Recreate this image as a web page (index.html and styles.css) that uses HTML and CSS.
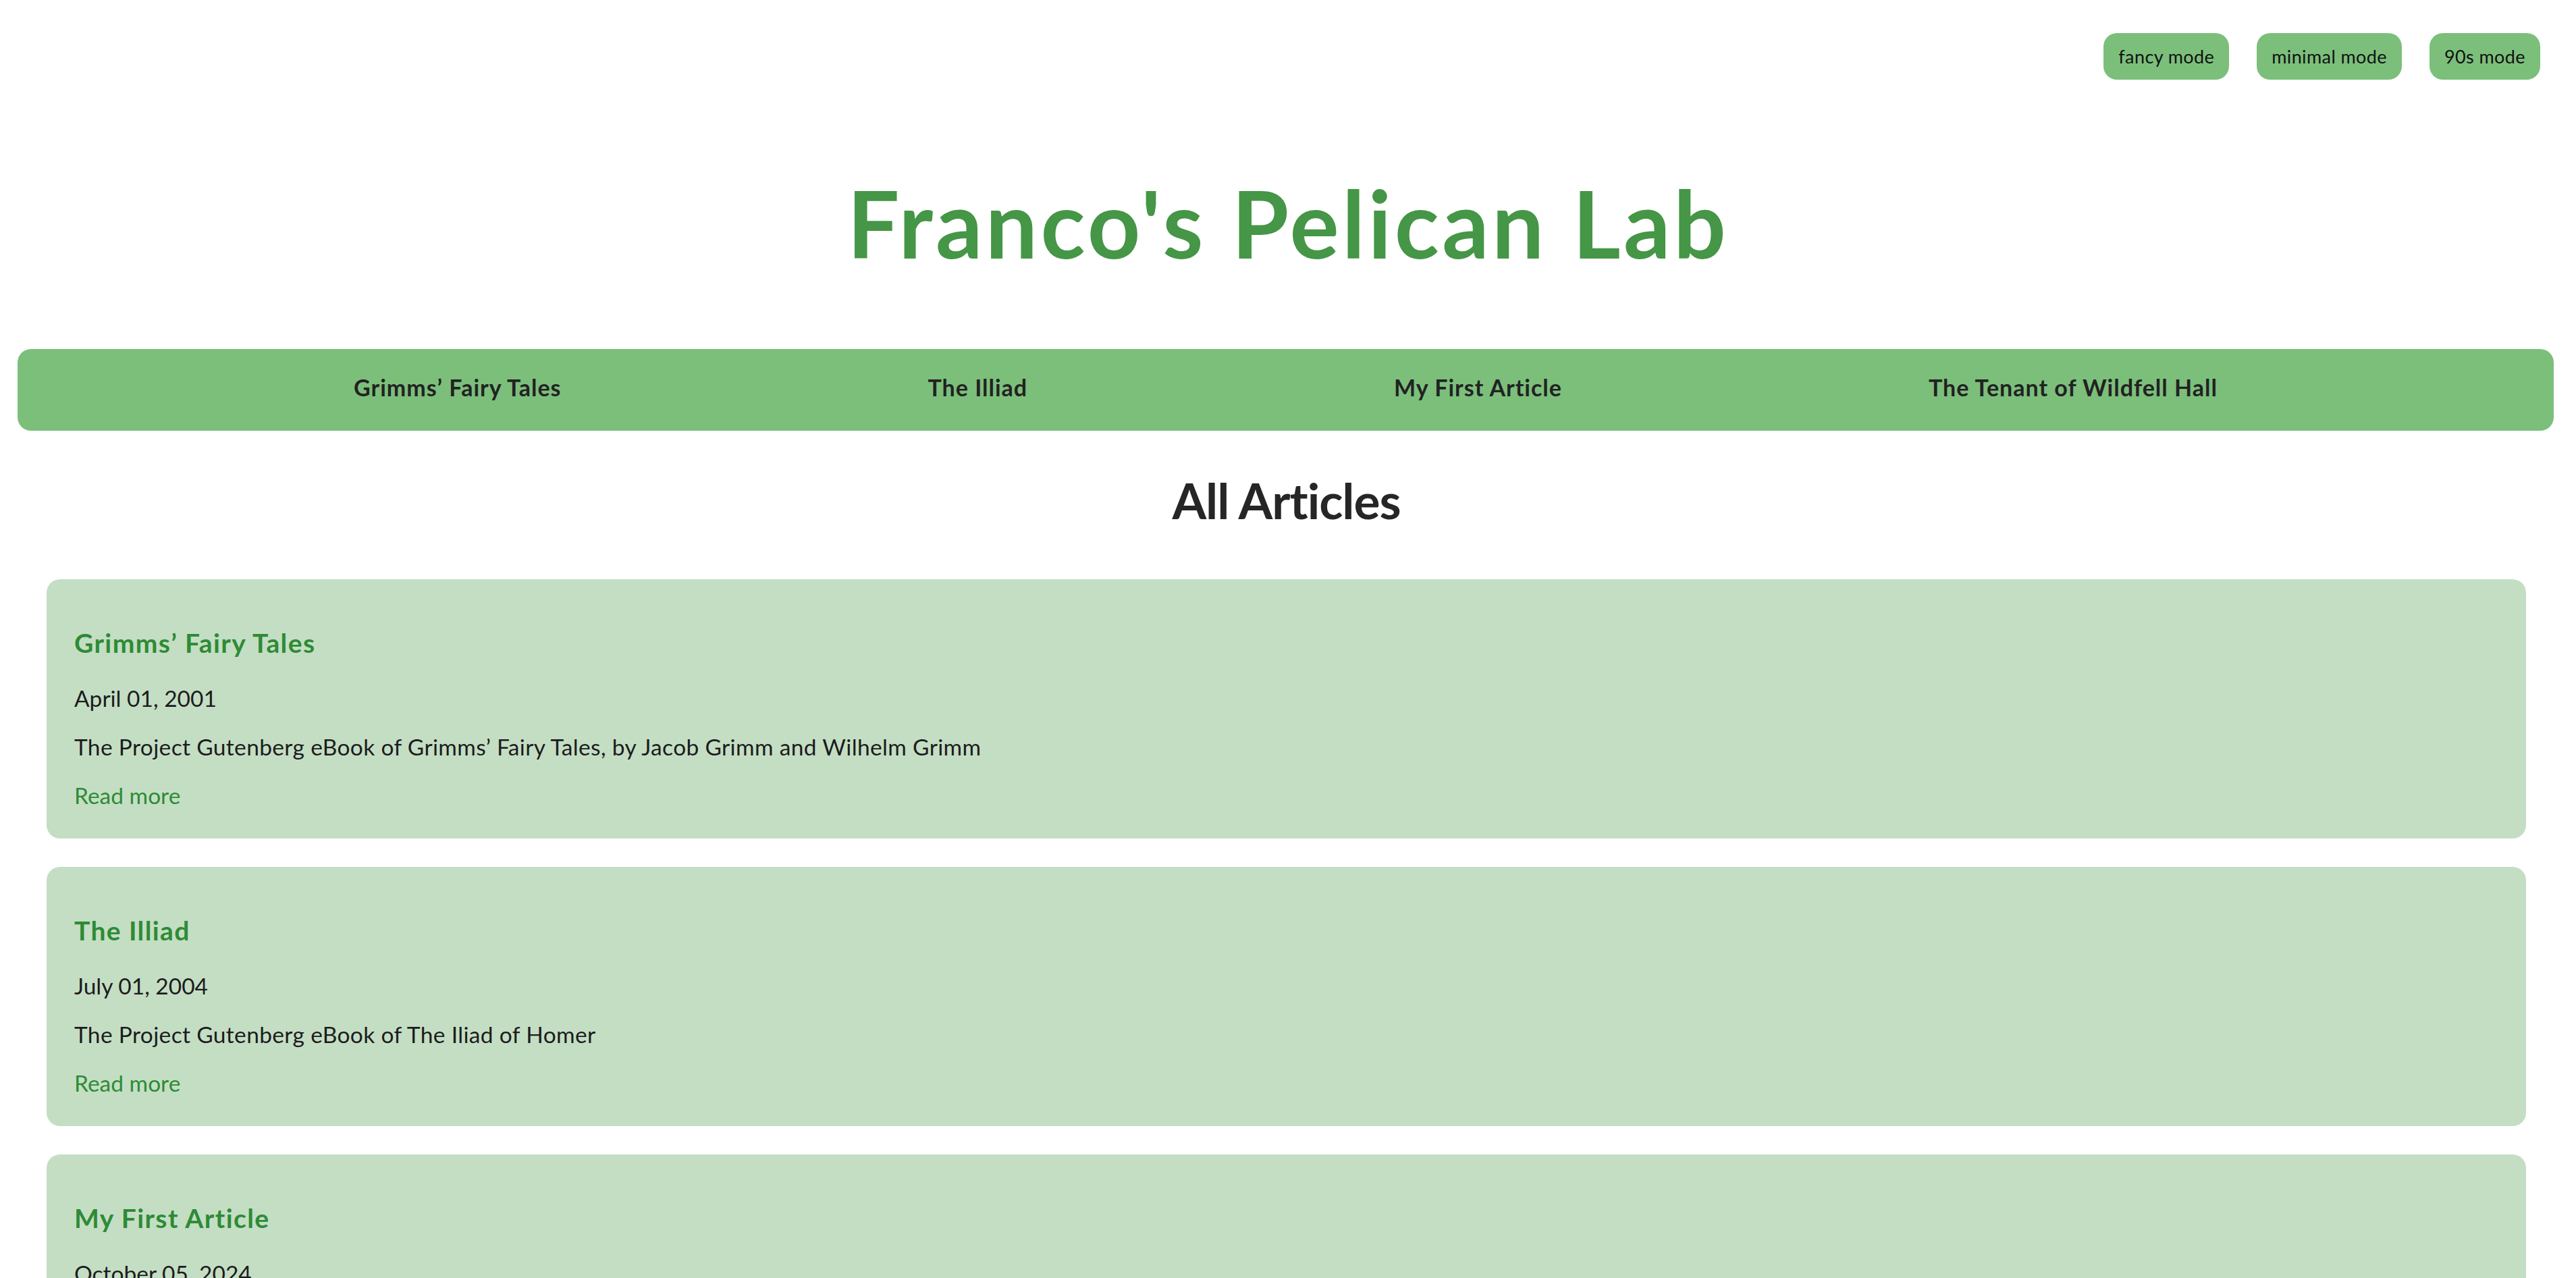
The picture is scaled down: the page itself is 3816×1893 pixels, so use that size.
FILE: index.html
```html
<!DOCTYPE html>
<html lang="en">
<head>
<meta charset="utf-8">
<title>Franco's Pelican Lab</title>
<link rel="stylesheet" href="styles.css">
</head>
<body>
<header class="site-header">
  <div class="modes">
    <button class="mode-btn">fancy mode</button>
    <button class="mode-btn">minimal mode</button>
    <button class="mode-btn">90s mode</button>
  </div>
  <h1 class="site-title">Franco's Pelican Lab</h1>
  <nav class="main-nav">
    <a href="#">Grimms’ Fairy Tales</a>
    <a href="#">The Illiad</a>
    <a href="#">My First Article</a>
    <a href="#">The Tenant of Wildfell Hall</a>
  </nav>
</header>
<main class="content">
  <h2 class="page-title">All Articles</h2>
  <div class="articles">
    <article class="card">
      <h3 class="card-title">Grimms’ Fairy Tales</h3>
      <p class="card-date">April 01, 2001</p>
      <p class="card-desc">The Project Gutenberg eBook of Grimms’ Fairy Tales, by Jacob Grimm and Wilhelm Grimm</p>
      <a class="read-more" href="#">Read more</a>
    </article>
    <article class="card">
      <h3 class="card-title">The Illiad</h3>
      <p class="card-date">July 01, 2004</p>
      <p class="card-desc">The Project Gutenberg eBook of The Iliad of Homer</p>
      <a class="read-more" href="#">Read more</a>
    </article>
    <article class="card">
      <h3 class="card-title">My First Article</h3>
      <p class="card-date">October 05, 2024</p>
      <p class="card-desc">This is my first article on the blog.</p>
      <a class="read-more" href="#">Read more</a>
    </article>
    <article class="card">
      <h3 class="card-title">The Tenant of Wildfell Hall</h3>
      <p class="card-date">June 01, 1997</p>
      <p class="card-desc">The Project Gutenberg eBook of The Tenant of Wildfell Hall, by Anne Brontë</p>
      <a class="read-more" href="#">Read more</a>
    </article>
  </div>
</main>
</body>
</html>
```

FILE: styles.css
```css
html, body {
  margin: 0;
  padding: 0;
  background: #ffffff;
}

body {
  font-family: "Lato", "Noto Sans", sans-serif;
  color: #222222;
}

.site-header {
  display: flex;
  flex-direction: column;
}

.modes {
  display: flex;
  justify-content: flex-end;
  gap: 41px;
  padding: 49px 53px 0 0;
}

.mode-btn {
  font-family: "Lato", "Noto Sans", sans-serif;
  font-size: 27px;
  letter-spacing: 0.4px;
  color: #111111;
  background: #7bbf7b;
  border: none;
  border-radius: 20px;
  height: 69px;
  line-height: 69px;
  padding: 0 22px;
  margin: 0;
}

.site-title {
  margin: 130px 0 0;
  text-align: center;
  font-size: 137px;
  line-height: 164px;
  font-weight: 700;
  letter-spacing: 4.4px;
  color: #459646;
}

.main-nav {
  margin: 105px 33px 0 26px;
  background: #7bbf7b;
  border-radius: 20px;
  display: flex;
  justify-content: center;
  gap: 543px;
  padding: 36px 0 44px;
}

.main-nav a {
  font-size: 34px;
  line-height: 41px;
  font-weight: 700;
  letter-spacing: 1px;
  color: #222222;
  text-decoration: none;
}

.content {
  padding: 0 74px 60px 69px;
}

.page-title {
  margin: 59px 0 0;
  text-align: center;
  font-size: 73px;
  line-height: 88px;
  font-weight: 700;
  letter-spacing: -1px;
  color: #262626;
}

.articles {
  margin-top: 73px;
  display: flex;
  flex-direction: column;
  gap: 42px;
}

.card {
  background: #c4dec4;
  border-radius: 20px;
  padding: 71px 41px 44px;
  display: flex;
  flex-direction: column;
  align-items: flex-start;
  gap: 32px;
}

.card-title {
  margin: 0 0 6px;
  font-size: 39px;
  line-height: 47px;
  font-weight: 700;
  letter-spacing: 1.4px;
  color: #2e8b35;
}

.card-date,
.card-desc {
  margin: 0;
  font-size: 33.5px;
  line-height: 40px;
  color: #1c1c1c;
}

.card-desc {
  letter-spacing: 0.35px;
}

.read-more {
  font-size: 33.5px;
  line-height: 40px;
  color: #2e8b35;
  text-decoration: none;
}
```
